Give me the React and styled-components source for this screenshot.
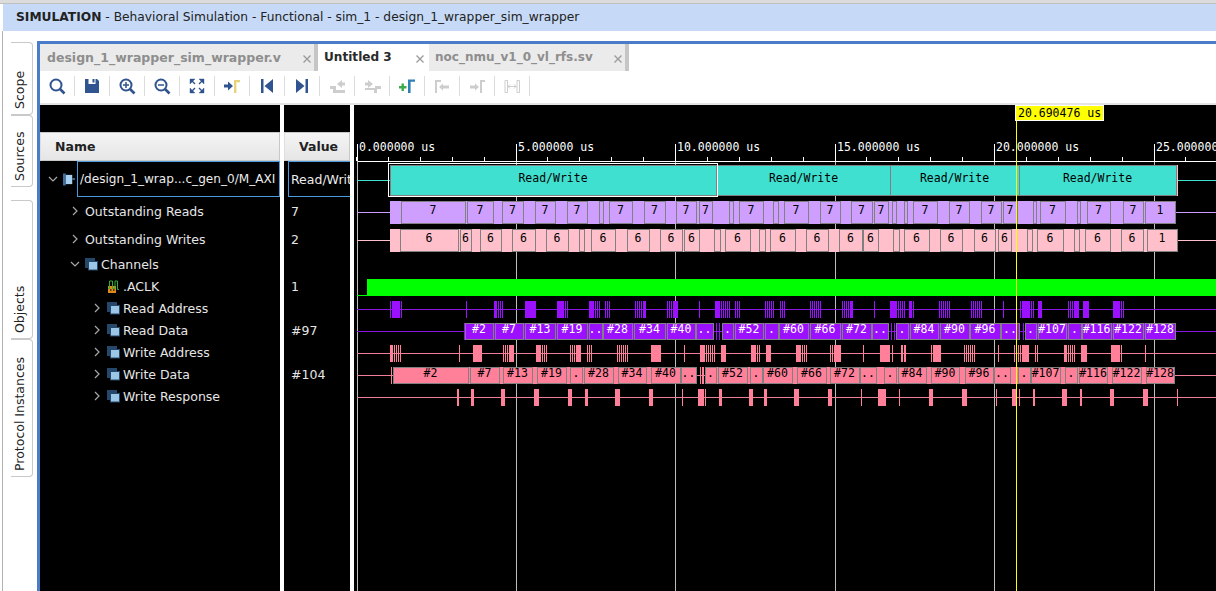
import React from "react"
import styled, { createGlobalStyle } from "styled-components"

const Global = createGlobalStyle`
    html, body {
        margin: 0;
        padding: 0;
        background: white;
    }
    * {
        box-sizing: border-box;
    }
`

const Page = styled.div`
    width: 1216px;
    height: 591px;
    overflow: hidden;
    display: flex;
    flex-direction: column;
    font-family: "DejaVu Sans", sans-serif;
    font-size: 12.5px;
    background: white;
`

const TopEdge = styled.div`
    height: 4px;
    flex: none;
    background: #dcdcdc;
    border-bottom: 1px solid #c0c0c0;
`

const TitleBar = styled.div`
    height: 27px;
    flex: none;
    margin-left: 3px;
    padding: 0 0 1px 13px;
    display: flex;
    align-items: center;
    background: #c6daf7;
    color: #222;
    font-size: 12.25px;
    white-space: pre;

    b {
        font-weight: bold;
    }
`

const Main = styled.div`
    flex: 1;
    min-height: 0;
    display: flex;
    padding-left: 2px;
`

const Sidebar = styled.div`
    width: 35px;
    flex: none;
    padding: 11px 4px 0 8px;
    border-left: 1px solid #b4b4b4;
    display: flex;
    flex-direction: column;
`

const SideTab = styled.div`
    height: ${p => p.$h}px;
    margin-top: ${p => p.$gap || 0}px;
    flex: none;
    border: 1px solid #c9c9c9;
    border-right: none;
    border-radius: 4px 0 0 4px;
    display: flex;
    align-items: center;
    justify-content: flex-start;
    writing-mode: vertical-rl;
    transform: rotate(180deg);
    padding: 5px 0 0 4px;
    color: #222;
    line-height: 16px;
    white-space: nowrap;
`

const Panel = styled.div`
    flex: 1;
    min-width: 0;
    margin-top: 10px;
    border-top: 3px solid #4a7cc9;
    border-left: 3px solid #4a7cc9;
    display: flex;
    flex-direction: column;
`

const TabStrip = styled.div`
    height: 27px;
    flex: none;
    display: flex;
`

const Tab = styled.div`
    width: ${p => p.$w}px;
    flex: none;
    display: flex;
    align-items: center;
    justify-content: space-between;
    padding: 0 ${p => p.$handle ? 3 : 5}px 1px ${p => p.$left}px;
    background: ${p => p.$active ? "white" : "#ebebeb"};
    color: ${p => p.$active ? "#2a2a2a" : "#8e8e8e"};
    font-size: ${p => p.$size || 12.5}px;
    font-weight: bold;
    border-right: ${p => p.$handle ? "4px solid #c6c6c6" : "none"};
`

const CloseMark = styled.svg`
    width: 8px;
    height: 8px;
    margin-top: 3px;
    flex: none;
    stroke: #9a9a9a;
    stroke-width: 1.3;
`

const Toolbar = styled.div`
    height: 34px;
    flex: none;
    display: flex;
    align-items: center;
    background: white;
    border-bottom: 2px solid #e4e4e4;
    padding-bottom: 2px;
`

const ToolButton = styled.div`
    width: 35px;
    height: 20px;
    flex: none;
    display: flex;
    align-items: center;
    justify-content: center;
    border-right: 1px solid #dcdcdc;
    padding-right: 1px;

    svg {
        width: 18px;
        height: 18px;
    }
`

const WaveArea = styled.div`
    flex: 1;
    min-height: 0;
    display: flex;
    background: black;
`

const Column = styled.div`
    width: ${p => p.$w}px;
    flex: none;
    background: black;
    padding-top: 27px;
    overflow: hidden;
`

const Splitter = styled.div`
    width: 4px;
    flex: none;
    background: white;
`

const HeaderCell = styled.div`
    height: 29px;
    display: flex;
    align-items: center;
    padding-left: ${p => p.$left}px;
    background: linear-gradient(#f4f4f4, #e6e6e6);
    border: 1px solid #c8c8c8;
    border-left-color: #dedede;
    color: #222;
    font-weight: bold;
`

const Row = styled.div`
    height: ${p => p.$h}px;
    display: flex;
    align-items: center;
    gap: 3px;
    padding-left: ${p => p.$indent}px;
    color: #e6e6e6;
    white-space: nowrap;
`

const ChevronSlot = styled.span`
    width: 14px;
    height: 14px;
    flex: none;
    display: flex;
    align-items: center;
    justify-content: center;

    svg {
        fill: none;
        stroke: #a8a8a8;
        stroke-width: 1.2;
        width: 10px;
        height: 10px;
    }
`

const NodeIcon = styled.svg`
    width: 13px;
    height: 13px;
    flex: none;
`

const Selected = styled.div`
    flex: 1;
    min-width: 0;
    height: 36px;
    margin-left: ${p => p.$left || 0}px;
    padding-left: 2px;
    display: flex;
    align-items: center;
    border: 1px solid #4a9be0;
    ${p => p.$open ? "border-right: none;" : ""}
    color: #ececec;
    font-size: ${p => p.$size || 12.5}px;
    overflow: hidden;
    white-space: nowrap;
`

const ValueRow = styled.div`
    height: ${p => p.$h}px;
    padding-left: 7px;
    display: flex;
    align-items: center;
    color: #e6e6e6;
`

const Canvas = styled.svg`
    width: 862px;
    height: 486px;
    flex: none;
    display: block;
    shape-rendering: crispEdges;
`

const WaveText = styled.text`
    font-family: "DejaVu Sans Mono", monospace;
    font-size: 11.5px;
    fill: ${p => p.$color || "black"};
    text-anchor: ${p => p.$anchor || "middle"};
    shape-rendering: auto;
`

const navy = "#2f5490"
const faded = "#cdcdcd"

const Chevron = ({ open }) => (
    <svg viewBox="0 0 10 10">
        <path d={open ? "M1 3l4 4 4-4" : "M3 1l4 4-4 4"} />
    </svg>
)

const GroupIcon = () => (
    <NodeIcon viewBox="0 0 13 13">
        <rect x="0" y="0" width="10" height="10" fill="#24476a" />
        <rect x="3.500" y="3.500" width="9" height="8.500" fill="#9cc6e6" stroke="#24476a" />
    </NodeIcon>
)

const ClockIcon = () => (
    <NodeIcon viewBox="0 0 13 13">
        <rect x="1" y="6" width="8" height="7" fill="#e08a1e" />
        <rect x="3" y="9" width="1.500" height="2" fill="#5a3400" />
        <rect x="6" y="9" width="1.500" height="2" fill="#5a3400" />
        <path d="M1 8.500h1.500V1h3v7.500h2.500V1h2.500v8.500H12" fill="none" stroke="#2fae3a" />
    </NodeIcon>
)

const BusIcon = () => (
    <NodeIcon viewBox="0 0 13 13" style={{ width: 12 }}>
        <rect x="0" y="0" width="3" height="13" fill="#3f6f9c" />
        <rect x="3" y="1.500" width="7" height="10" fill="#a9d0ee" />
        <rect x="10" y="5" width="3" height="2" fill="#3f6f9c" />
    </NodeIcon>
)

const toolIcons = [
    <svg viewBox="0 0 18 18" key="search" fill="none" stroke={navy}>
        <circle cx="8" cy="8" r="5.500" strokeWidth="2" />
        <path d="M12 12l4.500 4.500" strokeWidth="2.600" />
    </svg>,
    <svg viewBox="0 0 18 18" key="save">
        <path d="M2 2h3.500v5h7V2H14l2 2v12H2z" fill={navy} />
        <rect x="9.500" y="2" width="2" height="3.500" fill={navy} />
    </svg>,
    <svg viewBox="0 0 18 18" key="in" fill="none" stroke={navy}>
        <circle cx="8" cy="8" r="5.500" strokeWidth="2" />
        <path d="M12 12l4.500 4.500" strokeWidth="2.600" />
        <path d="M5 8h6M8 5v6" strokeWidth="1.500" />
    </svg>,
    <svg viewBox="0 0 18 18" key="out" fill="none" stroke={navy}>
        <circle cx="8" cy="8" r="5.500" strokeWidth="2" />
        <path d="M12 12l4.500 4.500" strokeWidth="2.600" />
        <path d="M5 8h6" strokeWidth="1.500" />
    </svg>,
    <svg viewBox="0 0 18 18" key="fit" fill={navy} stroke={navy}>
        <path d="M2 2h5l-5 5zM16 2h-5l5 5zM2 16h5l-5-5zM16 16h-5l5-5z" strokeWidth="0.400" />
        <path d="M3 3l4 4M15 3l-4 4M3 15l4-4M15 15l-4-4" strokeWidth="1.400" />
    </svg>,
    <svg viewBox="0 0 18 18" key="to">
        <path d="M1 7.500h4V4.500l5 4.500-5 4.500v-3H1z" fill={navy} />
        <path d="M11 16V3h6v2.200h-3.600V16z" fill="#e8d27c" />
    </svg>,
    <svg viewBox="0 0 18 18" key="first" fill={navy}>
        <rect x="3" y="2" width="2.500" height="14" />
        <path d="M15 2v14L6.500 9z" />
    </svg>,
    <svg viewBox="0 0 18 18" key="last" fill={navy}>
        <path d="M3 2v14l8.500-7z" />
        <rect x="12.500" y="2" width="2.500" height="14" />
    </svg>,
    <svg viewBox="0 0 18 18" key="prev" fill={faded}>
        <path d="M9 7l5-4v2.500h3v3h-3V11zM2 9h6v4h9v3H5v-4H2z" />
    </svg>,
    <svg viewBox="0 0 18 18" key="next" fill={faded}>
        <path d="M10 7L5 3v2.500H2v3h3V11zM2 11v2h9v3h3v-4h4V9h-6v2z" />
    </svg>,
    <svg viewBox="0 0 18 18" key="add">
        <path d="M3.500 6.500h2.400v2.600h2.600v2.400H5.900v2.600H3.500v-2.600H1V9.100h2.500z" fill="#3dab4d" />
        <path d="M10 16V2.500h7v2.300h-4.400V16z" fill="#2f7fb8" />
    </svg>,
    <svg viewBox="0 0 18 18" key="cprev" fill={faded}>
        <path d="M2 16V3h6v2H4v11z" />
        <path d="M6 10l4-3.500V8.500h6v3h-6v2z" />
    </svg>,
    <svg viewBox="0 0 18 18" key="cnext" fill={faded}>
        <path d="M12 16V3h5v2h-3v11z" />
        <path d="M11 10L7 6.500V8.500H2v3h5v2z" />
    </svg>,
    <svg viewBox="0 0 18 18" key="span" fill="none" stroke={faded}>
        <path d="M2 3.500h2.500v12H2zM14 3.500h2.500v12H14z" />
        <path d="M5 9.500h8M7 7.500l-2 2 2 2M11 7.500l2 2-2 2" />
    </svg>,
]

const tree = [
    { h: 28, indent: 28, label: "Outstanding Reads", value: "7", closed: true },
    { h: 28, indent: 28, label: "Outstanding Writes", value: "2", closed: true },
    { h: 22, indent: 28, label: "Channels", icon: "group", open: true },
    { h: 22, indent: 50, label: ".ACLK", value: "1", icon: "clock" },
    { h: 22, indent: 50, label: "Read Address", icon: "group", closed: true },
    { h: 22, indent: 50, label: "Read Data", value: "#97", icon: "group", closed: true },
    { h: 22, indent: 50, label: "Write Address", icon: "group", closed: true },
    { h: 22, indent: 50, label: "Write Data", value: "#104", icon: "group", closed: true },
    { h: 22, indent: 50, label: "Write Response", icon: "group", closed: true },
]

// wave data, all x are screen pixels. a plain number is a 1px pulse, a pair is a wide one
const readBoxes = [
    [401, 466], [467, 494], [502, 524], [535, 556], [567, 588], [599, 604], [609, 633], [644, 666],
    [676, 697], [699, 713], [729, 734], [739, 764], [773, 779], [784, 809], [820, 841], [851, 873],
    [874, 889], [892, 897], [904, 908], [913, 938], [949, 970], [981, 1002], [1003, 1018],
    [1033, 1037], [1040, 1066], [1077, 1081], [1087, 1111], [1123, 1144],
]
const writeBoxes = [
    [400, 459], [460, 472], [480, 502], [512, 536], [546, 569], [579, 585], [591, 616], [627, 650],
    [660, 683], [684, 700], [714, 721], [725, 751], [759, 766], [770, 796], [806, 829], [839, 863],
    [863, 879], [893, 900], [904, 930], [940, 963], [974, 996], [998, 1012], [1027, 1033],
    [1037, 1064], [1074, 1080], [1085, 1111], [1121, 1144],
]
const readAddress = [
    390, [392, 400], 401, 466, [494, 497], 498, 500, 502, [525, 535], 535, [557, 564], 565, 567,
    [589, 594], 595, 597, 599, 605, 607, 609, 635, 637, 639, 641, [643, 646], 667, 669, 671, [673, 678],
    699, [715, 720], 721, 723, 725, 727, 729, 735, 737, 739, 765, 767, 769, 771, 773, 780, 782, 784,
    810, 812, 814, 816, 818, 820, 842, 844, 846, 848, [850, 853], 874, [890, 897], 898, 900, 902, 904,
    [909, 912], 913, 939, 941, 943, 945, 947, 949, 971, 973, 975, 977, 979, 981, 1003, 1020,
    [1022, 1030], 1031, 1033, [1038, 1042], 1068, 1070, 1072, [1074, 1079], [1083, 1089], [1113, 1120],
    1121, 1123,
]
const readData = [
    [465, 494, "#2"], [495, 524, "#7"], [525, 556, "#13"], [557, 588, "#19"], [589, 603, ".."],
    [603, 633, "#28"], [634, 666, "#34"], [667, 696, "#40"], [696, 714, ".."], [722, 734, "."],
    [735, 764, "#52"], [765, 779, "."], [779, 809, "#60"], [810, 841, "#66"], [842, 872, "#72"],
    [872, 889, ".."], [896, 909, "."], [910, 939, "#84"], [940, 970, "#90"], [970, 1001, "#96"],
    [1001, 1020, ".."], [1025, 1037, "."], [1038, 1067, "#107"], [1068, 1082, "."], [1082, 1112, "#116"],
    [1113, 1144, "#122"], [1145, 1176, "#128"],
]
const writeAddress = [
    [390, 393], 394, 396, 398, 400, 459, [473, 482], 503, 505, 507, [509, 514], [536, 541], 542, 544, 546,
    570, 572, 574, [576, 581], 587, 589, 591, 617, 619, 621, 623, 625, 627, [651, 661], 684, [700, 705],
    706, 708, 710, 712, 714, [721, 726], [751, 756], 757, 759, [766, 771], [796, 801], 802, 804, 806,
    830, 832, [834, 841], 863, [880, 890], 892, [901, 903], [904, 906], 931, [933, 941],
    964, 966, 968, 970, 972, 974, 998, 1014, 1016, 1018, 1020, [1022, 1029], 1035, 1037, [1064, 1067],
    1068, 1070, 1072, 1074, [1081, 1087], [1111, 1120], 1121, 1145,
]
const writeData = [
    [393, 469, "#2"], [470, 500, "#7"], [503, 533, "#13"], [537, 567, "#19"], [570, 583, "."],
    [584, 614, "#28"], [618, 647, "#34"], [651, 681, "#40"], [681, 697, ".."], [705, 717, "."],
    [718, 748, "#52"], [750, 763, "."], [763, 793, "#60"], [797, 827, "#66"], [830, 860, "#72"],
    [860, 877, ".."], [884, 897, "."], [898, 927, "#84"], [931, 960, "#90"], [965, 994, "#96"],
    [994, 1011, ".."], [1018, 1031, "."], [1031, 1061, "#107"], [1065, 1078, "."], [1079, 1108, "#116"],
    [1112, 1142, "#122"], [1146, 1175, "#128"],
]
const writeResponse = [
    [457, 459], [471, 474], [501, 505], [534, 539], [568, 572], [585, 588], [615, 620], [649, 653], 682,
    [698, 704], 705, [719, 722], [749, 753], [764, 767], [794, 799], [828, 832], 861, [878, 886], 899,
    [929, 933], [962, 967], 996, [1012, 1017], 1019, [1033, 1035], [1062, 1067], [1080, 1082],
    [1110, 1114], [1143, 1148], 1177,
]

const RIGHT = 1216
const outline = "#808080"
const majors = [357, 516, 675, 835, 994, 1154]
const minors = Array.from({ length: 27 }, (_, i) => Math.floor(356.5 + i * 31.9))

const Pulses = ({ items, y, h, color }) => items.map((p, i) => (
    Array.isArray(p)
        ? <rect key={i} x={p[0]} y={y} width={p[1] - p[0]} height={h} fill={color} />
        : <rect key={i} x={p} y={y} width={1} height={h} fill={color} />
))

const Box = ({ from, to, y, h, fill, label, textColor, baseline }) => (
    <g>
        <rect x={from + 0.5} y={y + 0.5} width={to - from - 1} height={h - 1} fill={fill} stroke={outline} />
        {label && <WaveText x={(from + to) / 2 - 0.5} y={baseline} $color={textColor}>{label}</WaveText>}
    </g>
)

function Waves() {
    return (
        <Canvas viewBox="354 105 862 486">
            <rect x="354" y="105" width="862" height="486" fill="black" />

            {majors.map(x => <rect key={x} x={x} y={161} width={1} height={430} fill="#bdbdbd" />)}
            {majors.map(x => <rect key={x} x={x} y={144} width={1} height={17} fill="white" />)}
            {minors.map(x => <rect key={x} x={x} y={157} width={1} height={4} fill="white" />)}
            <rect x="358" y="161" width="858" height="1" fill="white" />
            {majors.slice(0, 5).map((x, i) => (
                <WaveText key={x} x={x + 2} y={151} $color="white" $anchor="start">{i * 5}.000000 us</WaveText>
            ))}
            <WaveText x={1156} y={151} $color="white" $anchor="start">25.000000</WaveText>

            {/* root transaction row */}
            <rect x="357" y="180" width="33" height="1" fill="#40e0d0" />
            <rect x="1178" y="180" width="38" height="1" fill="#40e0d0" />
            <rect x="1176" y="165" width="2" height="31" fill="#ffc0cb" />
            <Box from={717} to={891} y={165} h={31} fill="#40e0d0" label="Read/Write" baseline={182} />
            <Box from={890} to={1020} y={165} h={31} fill="#40e0d0" label="Read/Write" baseline={182} />
            <Box from={1019} to={1177} y={165} h={31} fill="#40e0d0" label="Read/Write" baseline={182} />
            <Box from={390} to={717} y={165} h={31} fill="#40e0d0" label="Read/Write" baseline={182} />
            <rect x="388.500" y="163.500" width="329" height="33" fill="none" stroke="white" />

            {/* outstanding reads */}
            <rect x="357" y="212" width="33" height="1" fill="#cf9fff" />
            <rect x="1176" y="212" width="40" height="1" fill="#cf9fff" />
            <rect x="390" y="201" width="786" height="23" fill="#cf9fff" />
            {readBoxes.map(([a, b]) => (
                <Box key={a} from={a} to={b} y={201} h={23} fill="#cf9fff" label={b - a > 10 ? "7" : null} baseline={214} />
            ))}
            <Box from={1145} to={1176} y={201} h={23} fill="#cf9fff" label="1" baseline={214} />

            {/* outstanding writes */}
            <rect x="357" y="240" width="33" height="1" fill="#ffc0cb" />
            <rect x="1178" y="240" width="38" height="1" fill="#ffc0cb" />
            <rect x="390" y="229" width="788" height="23" fill="#ffc0cb" />
            {writeBoxes.map(([a, b]) => (
                <Box key={a} from={a} to={b} y={229} h={23} fill="#ffc0cb" label={b - a > 10 ? "6" : null} baseline={242} />
            ))}
            <Box from={1147} to={1178} y={229} h={23} fill="#ffc0cb" label="1" baseline={242} />

            {/* ACLK */}
            <rect x="357" y="295" width="10" height="1" fill="#00ff00" />
            <rect x="367" y="279" width="849" height="17" fill="#00ff00" />

            {/* read address */}
            <rect x="357" y="309" width={RIGHT - 357} height="1" fill="#8a14e0" />
            <Pulses items={readAddress} y={301} h={17} color="#9a10ff" />

            {/* read data */}
            <rect x="357" y="331" width={RIGHT - 357} height="1" fill="#8a14e0" />
            <rect x="464" y="323" width="250" height="17" fill="#9a10ff" />
            <rect x="722" y="323" width="167" height="17" fill="#9a10ff" />
            <rect x="896" y="323" width="124" height="17" fill="#9a10ff" />
            <rect x="1025" y="323" width="151" height="17" fill="#9a10ff" />
            <Pulses items={[716, 719, 891, 894, 1023]} y={323} h={17} color="#9a10ff" />
            {readData.map(([a, b, t]) => (
                <Box key={a} from={a} to={b} y={323} h={17} fill="#9a10ff" label={t} textColor="white" baseline={333} />
            ))}

            {/* write address */}
            <rect x="357" y="353" width={RIGHT - 357} height="1" fill="#f0809a" />
            <Pulses items={writeAddress} y={345} h={17} color="#ff8098" />

            {/* write data */}
            <rect x="357" y="375" width={RIGHT - 357} height="1" fill="#f0809a" />
            <rect x="393" y="367" width="304" height="17" fill="#ff8098" />
            <rect x="705" y="367" width="470" height="17" fill="#ff8098" />
            <Pulses items={[391, 700, 702, 703]} y={367} h={17} color="#ff8098" />
            {writeData.map(([a, b, t]) => (
                <Box key={a} from={a} to={b} y={367} h={17} fill="#ff8098" label={t} baseline={377} />
            ))}

            {/* write response */}
            <rect x="357" y="397" width={RIGHT - 357} height="1" fill="#f0809a" />
            <Pulses items={writeResponse} y={389} h={17} color="#ff8098" />

            {/* cursor */}
            <rect x="1016" y="121" width="1" height="470" fill="#ffff00" />
            <rect x="1015.500" y="105.500" width="88" height="15" fill="#ffff00" stroke="white" />
            <WaveText x="1018" y="117" $anchor="start">20.690476 us</WaveText>
        </Canvas>
    )
}

const nodeIcons = { group: <GroupIcon />, clock: <ClockIcon /> }

export default function App() {
    return (
        <Page>
            <Global />
            <TopEdge />
            <TitleBar><b>SIMULATION</b> - Behavioral Simulation - Functional - sim_1 - design_1_wrapper_sim_wrapper</TitleBar>
            <Main>
                <Sidebar>
                    <SideTab $h={73}>Scope</SideTab>
                    <SideTab $h={72}>Sources</SideTab>
                    <SideTab $h={139} $gap={13}>Objects</SideTab>
                    <SideTab $h={138}>Protocol Instances</SideTab>
                </Sidebar>
                <Panel>
                    <TabStrip>
                        <Tab $w={278} $left={7} $handle>
                            design_1_wrapper_sim_wrapper.v
                            <CloseMark viewBox="0 0 8 8"><path d="M0.500 0.500l7 7M7.500 0.500l-7 7" /></CloseMark>
                        </Tab>
                        <Tab $w={111} $left={6} $active $size={12.1}>
                            Untitled 3
                            <CloseMark viewBox="0 0 8 8"><path d="M0.500 0.500l7 7M7.500 0.500l-7 7" /></CloseMark>
                        </Tab>
                        <Tab $w={200} $left={6} $handle $size={12}>
                            noc_nmu_v1_0_vl_rfs.sv
                            <CloseMark viewBox="0 0 8 8"><path d="M0.500 0.500l7 7M7.500 0.500l-7 7" /></CloseMark>
                        </Tab>
                    </TabStrip>
                    <Toolbar>
                        {toolIcons.map(icon => <ToolButton key={icon.key}>{icon}</ToolButton>)}
                    </Toolbar>
                    <WaveArea>
                        <Column $w={240}>
                            <HeaderCell $left={14}>Name</HeaderCell>
                            <Row $h={36} $indent={6}>
                                <ChevronSlot><Chevron open /></ChevronSlot>
                                <BusIcon />
                                <Selected $left={-1} $size={12.1}>/design_1_wrap...c_gen_0/M_AXI</Selected>
                            </Row>
                            {tree.map(node => (
                                <Row key={node.label} $h={node.h} $indent={node.indent}>
                                    <ChevronSlot>
                                        {node.open && <Chevron open />}
                                        {node.closed && <Chevron />}
                                    </ChevronSlot>
                                    {node.icon && nodeIcons[node.icon]}
                                    {node.label}
                                </Row>
                            ))}
                        </Column>
                        <Splitter />
                        <Column $w={66}>
                            <HeaderCell $left={14}>Value</HeaderCell>
                            <Row $h={36} $indent={4}>
                                <Selected $open>Read/Write</Selected>
                            </Row>
                            {tree.map(node => (
                                <ValueRow key={node.label} $h={node.h}>{node.value}</ValueRow>
                            ))}
                        </Column>
                        <Splitter />
                        <Waves />
                    </WaveArea>
                </Panel>
            </Main>
        </Page>
    )
}
